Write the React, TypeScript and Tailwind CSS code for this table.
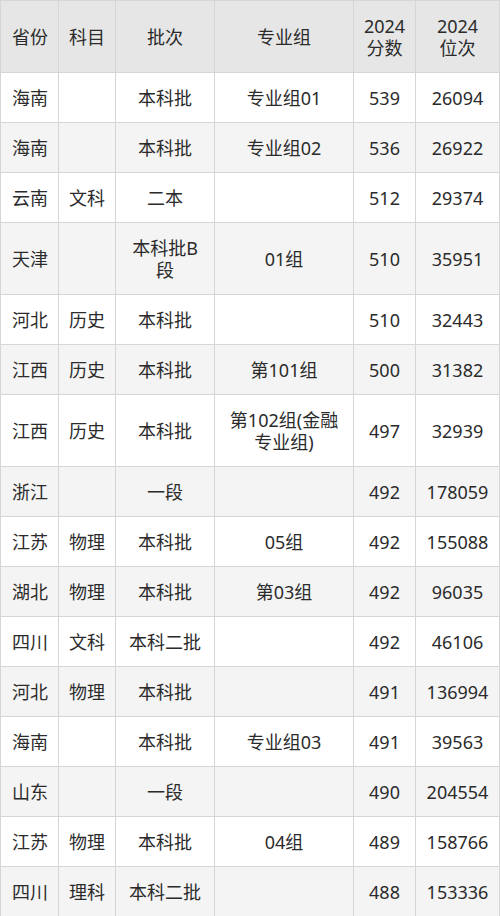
import React from "react";

type Row = { p: string; s: string; b: React.ReactNode; g: React.ReactNode; score: string; rank: string; tall?: boolean };

const rows: Row[] = [
  { p: "海南", s: "", b: "本科批", g: "专业组01", score: "539", rank: "26094" },
  { p: "海南", s: "", b: "本科批", g: "专业组02", score: "536", rank: "26922" },
  { p: "云南", s: "文科", b: "二本", g: "", score: "512", rank: "29374" },
  { p: "天津", s: "", b: (<>本科批B<br />段</>), g: "01组", score: "510", rank: "35951", tall: true },
  { p: "河北", s: "历史", b: "本科批", g: "", score: "510", rank: "32443" },
  { p: "江西", s: "历史", b: "本科批", g: "第101组", score: "500", rank: "31382" },
  { p: "江西", s: "历史", b: "本科批", g: (<>第102组(金融<br />专业组)</>), score: "497", rank: "32939", tall: true },
  { p: "浙江", s: "", b: "一段", g: "", score: "492", rank: "178059" },
  { p: "江苏", s: "物理", b: "本科批", g: "05组", score: "492", rank: "155088" },
  { p: "湖北", s: "物理", b: "本科批", g: "第03组", score: "492", rank: "96035" },
  { p: "四川", s: "文科", b: "本科二批", g: "", score: "492", rank: "46106" },
  { p: "河北", s: "物理", b: "本科批", g: "", score: "491", rank: "136994" },
  { p: "海南", s: "", b: "本科批", g: "专业组03", score: "491", rank: "39563" },
  { p: "山东", s: "", b: "一段", g: "", score: "490", rank: "204554" },
  { p: "江苏", s: "物理", b: "本科批", g: "04组", score: "489", rank: "158766" },
  { p: "四川", s: "理科", b: "本科二批", g: "", score: "488", rank: "153336" },
];

function Cell({ children, first }: { children?: React.ReactNode; first?: boolean }) {
  return (
    <div
      className={
        "flex items-center border-r border-b border-[#d6d6d6] " +
        (first ? "justify-start pl-[11px]" : "justify-center text-center")
      }
    >
      <span>{children}</span>
    </div>
  );
}

export default function App() {
  return (
    <div
      className="w-[500px] bg-white text-[#2b2b2b] text-[18px] leading-[22px]"
      style={{ fontFamily: '"Noto Sans", "Noto Sans CJK SC", sans-serif' }}
    >
      <div className="grid grid-cols-[58px_57px_99px_139px_62px_84px] border-l border-t border-[#d6d6d6]">
        <div className="contents">
          {[
            <span key="a">省份</span>,
            <span key="b">科目</span>,
            <span key="c">批次</span>,
            <span key="d">专业组</span>,
            <span key="e">2024<br />分数</span>,
            <span key="f">2024<br />位次</span>,
          ].map((c, i) => (
            <div
              key={i}
              className={
                "h-[72px] flex items-center bg-[#e6e6e6] border-r border-b border-[#d6d6d6] " +
                (i === 0 ? "justify-start pl-[11px]" : "justify-center text-center")
              }
            >
              {c}
            </div>
          ))}
        </div>
        {rows.map((r, i) => (
          <div
            key={i}
            className={
              "contents " + (i % 2 === 1 ? "[&>div]:bg-[#f4f4f4]" : "[&>div]:bg-white") +
              (r.tall ? " [&>div]:h-[72px]" : " [&>div]:h-[50px]")
            }
          >
            <Cell first>{r.p}</Cell>
            <Cell>{r.s}</Cell>
            <Cell>{r.b}</Cell>
            <Cell>{r.g}</Cell>
            <Cell>{r.score}</Cell>
            <Cell>{r.rank}</Cell>
          </div>
        ))}
      </div>
    </div>
  );
}
